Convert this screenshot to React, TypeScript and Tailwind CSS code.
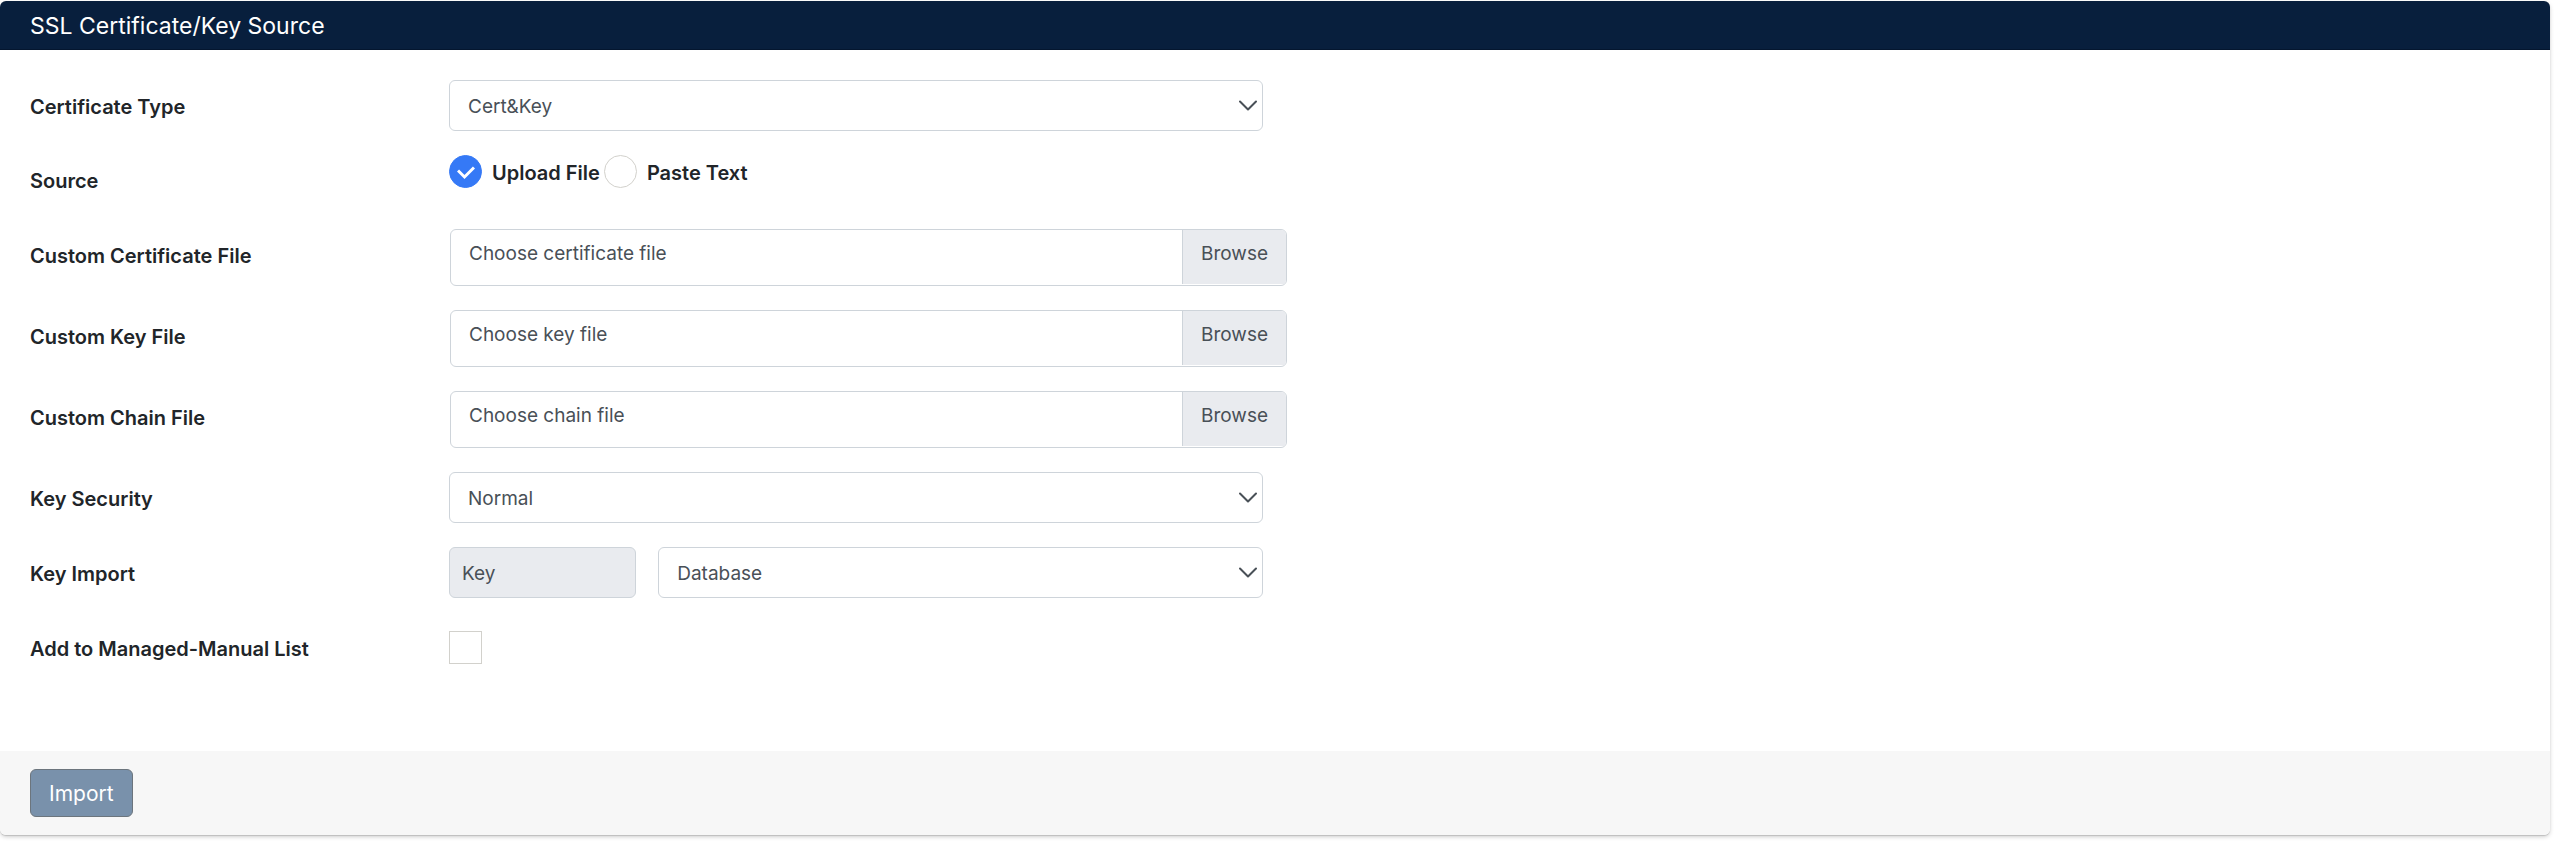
import type { ReactNode, SelectHTMLAttributes } from 'react'

interface FileField {
  id: string
  label: string
  placeholder: string
}

const fileFields: FileField[] = [
  { id: 'cert-file', label: 'Custom Certificate File', placeholder: 'Choose certificate file' },
  { id: 'key-file', label: 'Custom Key File', placeholder: 'Choose key file' },
  { id: 'chain-file', label: 'Custom Chain File', placeholder: 'Choose chain file' },
]

interface FormRowProps {
  label: string
  htmlFor?: string
  children: ReactNode
}

const FormRow = ({ label, htmlFor, children }: FormRowProps) => (
  <div className="grid grid-cols-6 gap-x-6">
    <label
      htmlFor={htmlFor}
      className="flex h-[51px] items-center whitespace-nowrap pt-0.5 text-[20px] font-semibold text-[#212529]"
    >
      {label}
    </label>
    <div className="col-span-2">{children}</div>
  </div>
)

const Select = ({ children, ...props }: SelectHTMLAttributes<HTMLSelectElement>) => (
  <div className="relative">
    <select
      {...props}
      className="block h-[51px] w-full appearance-none rounded-md border border-[#ced4da] bg-white px-[18px] pt-0.5 text-[#495057]"
    >
      {children}
    </select>
    <svg
      className="pointer-events-none absolute right-[6px] top-5 h-[11px] w-[18px]"
      viewBox="0 0 18 11"
      fill="none"
      stroke="#495057"
      strokeWidth={2}
      strokeLinecap="round"
      strokeLinejoin="round"
    >
      <path d="M1 1.5 9 9.5l8-8" />
    </svg>
  </div>
)

interface SourceRadioProps {
  id: string
  label: string
  defaultChecked?: boolean
}

const SourceRadio = ({ id, label, defaultChecked }: SourceRadioProps) => (
  <label
    htmlFor={id}
    className="relative flex items-center gap-[10px] whitespace-nowrap text-[20px] font-semibold text-[#212529]"
  >
    <input
      id={id}
      type="radio"
      name="source"
      defaultChecked={defaultChecked}
      className="peer size-[33px] appearance-none rounded-full border border-[#d2d1cc] bg-white checked:border-[#3579f6] checked:bg-[#3579f6]"
    />
    <svg
      className="pointer-events-none absolute left-2 top-[11px] hidden h-[14px] w-[18px] peer-checked:block"
      viewBox="0 0 18 14"
      fill="none"
      stroke="white"
      strokeWidth={3}
    >
      <path d="M1 4.5 7.5 11 17 1.5" />
    </svg>
    <span className="pt-0.5">{label}</span>
  </label>
)

const App = () => {
  return (
    <div className="bg-white pb-2 pr-3 pt-px font-['Inter',sans-serif] text-[19px] leading-7">
      <form className="overflow-hidden rounded-md shadow-[0_1px_1px_rgba(0,0,0,0.14),0_2px_4px_rgba(0,0,0,0.18)]">
        {/* Header */}
        <h2 className="border-b border-[#04162f] bg-[#081f3d] px-[30px] pb-[9px] pt-[11px] text-[23px] text-white">
          SSL Certificate/Key Source
        </h2>

        {/* Form fields */}
        <div className="flex flex-col gap-6 px-[30px] pb-[78px] pt-[30px]">
          <FormRow label="Certificate Type" htmlFor="cert-type">
            <Select id="cert-type" defaultValue="Cert&Key">
              <option>Cert&amp;Key</option>
              <option>PKCS12</option>
            </Select>
          </FormRow>

          <div className="grid grid-cols-6 gap-x-6" role="radiogroup" aria-labelledby="source-label">
            <span
              id="source-label"
              className="flex h-[50px] items-center pt-0.5 text-[20px] font-semibold text-[#212529]"
            >
              Source
            </span>
            <div className="col-span-2 flex items-start gap-1">
              <SourceRadio id="source-upload" label="Upload File" defaultChecked />
              <SourceRadio id="source-paste" label="Paste Text" />
            </div>
          </div>

          {fileFields.map((field) => (
            <FormRow key={field.id} label={field.label} htmlFor={field.id}>
              <label
                htmlFor={field.id}
                className="relative -mr-6 ml-px flex h-[57px] overflow-hidden rounded-md border border-[#ced4da] bg-white pb-px text-[#495057]"
              >
                <input id={field.id} type="file" className="sr-only" />
                <span className="flex-1 truncate px-[18px] pt-[10px]">{field.placeholder}</span>
                <span className="border-l border-[#ced4da] bg-[#e9ebef] px-[18px] pt-[10px]">Browse</span>
              </label>
            </FormRow>
          ))}

          <FormRow label="Key Security" htmlFor="key-security">
            <Select id="key-security" defaultValue="Normal">
              <option>Normal</option>
              <option>Password</option>
            </Select>
          </FormRow>

          <FormRow label="Key Import" htmlFor="key-import">
            <div className="grid grid-cols-[23%_1fr] gap-[22px]">
              <input
                id="key-import"
                type="text"
                value="Key"
                readOnly
                className="h-[51px] w-full rounded-md border border-[#ced4da] bg-[#e9ebef] px-3 pt-0.5 text-[#495057]"
              />
              <Select aria-label="Key location" defaultValue="Database">
                <option>Database</option>
                <option>File</option>
              </Select>
            </div>
          </FormRow>

          <FormRow label="Add to Managed-Manual List" htmlFor="managed-list">
            <input
              id="managed-list"
              type="checkbox"
              className="mt-[9px] block size-[33px] appearance-none border border-[#d2d1cc] bg-white checked:bg-[#3579f6]"
            />
          </FormRow>
        </div>

        {/* Footer */}
        <div className="bg-[#f7f7f7] px-[30px] py-[18px]">
          <button
            type="button"
            className="block h-12 rounded-md border border-[#6c757d] bg-[#7991ab] px-[18px] pt-0.5 text-[21px] text-white"
          >
            Import
          </button>
        </div>
      </form>
    </div>
  )
}

export default App
